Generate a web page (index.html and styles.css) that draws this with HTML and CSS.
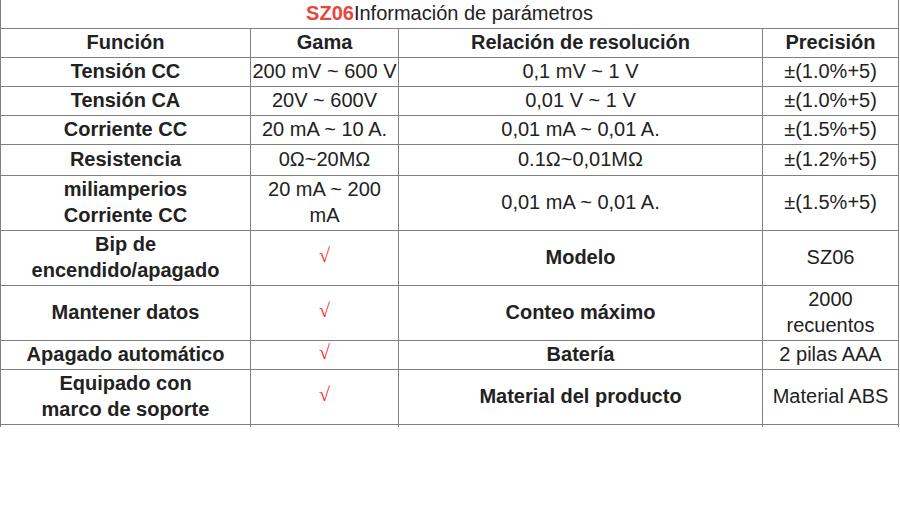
FILE: index.html
```html
<!DOCTYPE html>
<html lang="es">
<head>
<meta charset="utf-8">
<title>SZ06 Información de parámetros</title>
<link rel="stylesheet" href="styles.css">
</head>
<body>
<table class="spec">
  <colgroup>
    <col class="c1"><col class="c2"><col class="c3"><col class="c4">
  </colgroup>
  <tr><td class="title" colspan="4"><span class="brand">SZ06</span>Información de parámetros</td></tr>
  <tr class="head"><td>Función</td><td>Gama</td><td>Relación de resolución</td><td>Precisión</td></tr>
  <tr><td class="b">Tensión CC</td><td>200 mV ~ 600 V</td><td>0,1 mV ~ 1 V</td><td>±(1.0%+5)</td></tr>
  <tr><td class="b">Tensión CA</td><td>20V ~ 600V</td><td>0,01 V ~ 1 V</td><td>±(1.0%+5)</td></tr>
  <tr><td class="b">Corriente CC</td><td>20 mA ~ 10 A.</td><td>0,01 mA ~ 0,01 A.</td><td>±(1.5%+5)</td></tr>
  <tr class="omega"><td class="b">Resistencia</td><td>0Ω~20MΩ</td><td>0.1Ω~0,01MΩ</td><td>±(1.2%+5)</td></tr>
  <tr><td class="b">miliamperios<br>Corriente CC</td><td>20 mA ~ 200<br>mA</td><td>0,01 mA ~ 0,01 A.</td><td>±(1.5%+5)</td></tr>
  <tr><td class="b">Bip de<br>encendido/apagado</td><td><span class="check">√</span></td><td class="b">Modelo</td><td>SZ06</td></tr>
  <tr><td class="b">Mantener datos</td><td><span class="check">√</span></td><td class="b">Conteo máximo</td><td>2000<br>recuentos</td></tr>
  <tr><td class="b">Apagado automático</td><td><span class="check">√</span></td><td class="b">Batería</td><td>2 pilas AAA</td></tr>
  <tr><td class="b">Equipado con<br>marco de soporte</td><td><span class="check">√</span></td><td class="b">Material del producto</td><td>Material ABS</td></tr>
  <tr class="stub"><td></td><td></td><td></td><td></td></tr>
</table>
</body>
</html>
```

FILE: styles.css
```css
html, body {
  margin: 0;
  padding: 0;
  background: #ffffff;
}

body {
  font-family: "Liberation Sans", Arial, sans-serif;
  font-size: 20px;
  color: #222222;
}

.spec {
  border-collapse: collapse;
  table-layout: fixed;
  width: 898px;
  margin-top: -1px;
}

.c1 { width: 250px; }
.c2 { width: 148px; }
.c3 { width: 364px; }
.c4 { width: 136px; }

.spec td {
  border: 1px solid #808080;
  padding: 0 1px 2px;
  line-height: 26px;
  text-align: center;
  vertical-align: middle;
}

.spec .title {
  font-weight: normal;
}

.brand {
  color: #e8453c;
  font-weight: bold;
}

.head td,
.spec td.b {
  font-weight: bold;
}

.omega td {
  padding-top: 1px;
  padding-bottom: 3px;
}

.check {
  font-family: "Liberation Serif", "Times New Roman", serif;
  color: #ff1a1a;
  font-size: 20px;
  display: inline-block;
  transform: translateY(-2px);
}

.stub td {
  height: 2px;
  padding: 0;
  line-height: 0;
  border-bottom: none;
}
```
